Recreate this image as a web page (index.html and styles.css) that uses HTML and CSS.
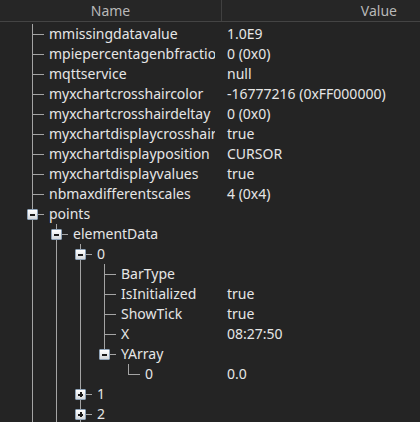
FILE: index.html
```html
<!DOCTYPE html>
<html>
<head>
<meta charset="utf-8">
<link rel="stylesheet" href="styles.css">
</head>
<body>
<div class="tree">
  <div class="header">
    <div class="h-name">Name</div>
    <div class="h-value">Value</div>
  </div>
  <div class="rows">
    <div class="row"><div class="name"><span class="u tee"></span><span class="t">mmissingdatavalue</span></div><div class="val">1.0E9</div></div>
    <div class="row"><div class="name"><span class="u tee"></span><span class="t">mpiepercentagenbfraction</span></div><div class="val">0 (0x0)</div></div>
    <div class="row"><div class="name"><span class="u tee"></span><span class="t">mqttservice</span></div><div class="val">null</div></div>
    <div class="row"><div class="name"><span class="u tee"></span><span class="t">myxchartcrosshaircolor</span></div><div class="val">-16777216 (0xFF000000)</div></div>
    <div class="row"><div class="name"><span class="u tee"></span><span class="t">myxchartcrosshairdeltay</span></div><div class="val">0 (0x0)</div></div>
    <div class="row"><div class="name"><span class="u tee"></span><span class="t">myxchartdisplaycrosshair</span></div><div class="val">true</div></div>
    <div class="row"><div class="name"><span class="u tee"></span><span class="t">myxchartdisplayposition</span></div><div class="val">CURSOR</div></div>
    <div class="row"><div class="name"><span class="u tee"></span><span class="t">myxchartdisplayvalues</span></div><div class="val">true</div></div>
    <div class="row"><div class="name"><span class="u tee"></span><span class="t">nbmaxdifferentscales</span></div><div class="val">4 (0x4)</div></div>
    <div class="row"><div class="name"><span class="u tee"><i class="exp minus"></i></span><span class="t">points</span></div><div class="val"></div></div>
    <div class="row"><div class="name"><span class="u pipe"></span><span class="u tee"><i class="exp minus"></i></span><span class="t">elementData</span></div><div class="val"></div></div>
    <div class="row"><div class="name"><span class="u pipe"></span><span class="u pipe"></span><span class="u tee"><i class="exp minus"></i></span><span class="t">0</span></div><div class="val"></div></div>
    <div class="row"><div class="name"><span class="u pipe"></span><span class="u pipe"></span><span class="u pipe"></span><span class="u tee"></span><span class="t">BarType</span></div><div class="val"></div></div>
    <div class="row"><div class="name"><span class="u pipe"></span><span class="u pipe"></span><span class="u pipe"></span><span class="u tee"></span><span class="t">IsInitialized</span></div><div class="val">true</div></div>
    <div class="row"><div class="name"><span class="u pipe"></span><span class="u pipe"></span><span class="u pipe"></span><span class="u tee"></span><span class="t">ShowTick</span></div><div class="val">true</div></div>
    <div class="row"><div class="name"><span class="u pipe"></span><span class="u pipe"></span><span class="u pipe"></span><span class="u tee"></span><span class="t">X</span></div><div class="val">08:27:50</div></div>
    <div class="row"><div class="name"><span class="u pipe"></span><span class="u pipe"></span><span class="u pipe"></span><span class="u elbow"><i class="exp minus"></i></span><span class="t">YArray</span></div><div class="val"></div></div>
    <div class="row"><div class="name"><span class="u pipe"></span><span class="u pipe"></span><span class="u pipe"></span><span class="u"></span><span class="u elbow"></span><span class="t">0</span></div><div class="val">0.0</div></div>
    <div class="row"><div class="name"><span class="u pipe"></span><span class="u pipe"></span><span class="u tee"><i class="exp plus"></i></span><span class="t">1</span></div><div class="val"></div></div>
    <div class="row"><div class="name"><span class="u pipe"></span><span class="u pipe"></span><span class="u tee"><i class="exp plus"></i></span><span class="t">2</span></div><div class="val"></div></div>
  </div>
</div>
</body>
</html>
```

FILE: styles.css
```css
body {
  margin: 0;
  background: #242424;
  font-family: "Noto Sans", "Open Sans", sans-serif;
  font-size: 14px;
  color: #e6e6e6;
  overflow: hidden;
}

.tree {
  --line: #a4a4a4;
  width: 420px;
}

.header {
  display: flex;
  height: 21px;
  line-height: 21px;
  background: #262626;
  border-bottom: 1px solid #444444;
  color: #b8b8b8;
}

.h-name {
  width: 221px;
  flex: none;
  text-align: center;
  border-right: 1px solid #404040;
}

.h-value {
  flex: 1;
  text-align: right;
  padding-right: 23px;
}

.rows {
  padding-top: 2px;
}

.row {
  display: flex;
  height: 20px;
}

.name {
  width: 221px;
  flex: none;
  display: flex;
  padding-left: 20px;
  padding-right: 6px;
  box-sizing: border-box;
  white-space: nowrap;
}

.u {
  width: 24px;
  height: 20px;
  flex: none;
  display: flex;
  align-items: center;
}

.pipe {
  background: linear-gradient(var(--line), var(--line)) 12px 0 / 1px 100% no-repeat;
}

.tee {
  background:
    linear-gradient(var(--line), var(--line)) 12px 0 / 1px 100% no-repeat,
    linear-gradient(var(--line), var(--line)) 12px 10px / 12px 1px no-repeat;
}

.elbow {
  background:
    linear-gradient(var(--line), var(--line)) 12px 0 / 1px 10px no-repeat,
    linear-gradient(var(--line), var(--line)) 12px 10px / 12px 1px no-repeat;
}

.exp {
  display: block;
  width: 9px;
  height: 9px;
  margin-left: 7px;
  margin-top: 1px;
  border: 1px solid #8fa3b8;
  border-radius: 1px;
}

.minus {
  background:
    linear-gradient(#1a1a1a, #1a1a1a) center / 5px 2px no-repeat,
    linear-gradient(#ffffff, #d4d8dc);
}

.plus {
  background:
    linear-gradient(#1a1a1a, #1a1a1a) center / 5px 2px no-repeat,
    linear-gradient(#1a1a1a, #1a1a1a) center / 2px 5px no-repeat,
    linear-gradient(#ffffff, #d4d8dc);
}

.t {
  padding-left: 5px;
  line-height: 20px;
  overflow: hidden;
  min-width: 0;
  flex: 1;
}

.val {
  flex: 1;
  padding-left: 6px;
  line-height: 20px;
  white-space: nowrap;
}
```
